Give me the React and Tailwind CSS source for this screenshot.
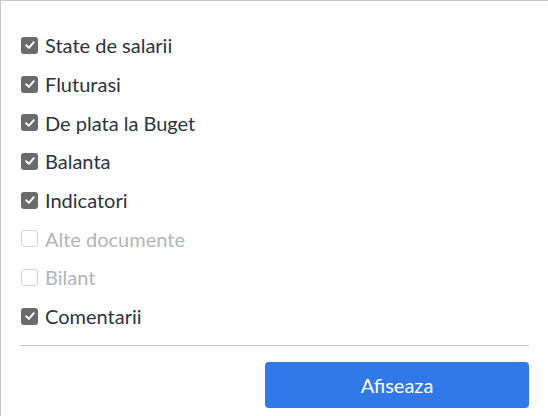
import React from "react";

const items = [
  { label: "State de salarii", checked: true },
  { label: "Fluturasi", checked: true },
  { label: "De plata la Buget", checked: true },
  { label: "Balanta", checked: true },
  { label: "Indicatori", checked: true },
  { label: "Alte documente", checked: false },
  { label: "Bilant", checked: false },
  { label: "Comentarii", checked: true },
];

// checkbox drawn as a small box, checked ones get a white tick
function Box({ checked }) {
  if (!checked) {
    return (
      <span className="block shrink-0 w-[17px] h-[17px] rounded-[3px] border border-[#d4d4d4] bg-white" />
    );
  }
  return (
    <span className="flex shrink-0 items-center justify-center w-[17px] h-[17px] rounded-[3px] bg-[#6b6b6b]">
      <svg width="12" height="12" viewBox="0 0 12 12" fill="none">
        <path
          d="M2.2 6.3 L4.9 8.9 L9.8 3.2"
          stroke="white"
          strokeWidth="2"
          strokeLinecap="round"
          strokeLinejoin="round"
        />
      </svg>
    </span>
  );
}

const App = () => {
  return (
    <div
      className="w-[548px] h-[416px] bg-white border-t border-l border-[#c8c8c8] overflow-hidden"
      style={{ fontFamily: "Lato, 'Liberation Sans', sans-serif" }}
    >
      <div className="pt-[25px] pl-[19px] pr-[19px]">
        <ul className="flex flex-col pl-[1px]">
          {items.map((item) => (
            <li
              key={item.label}
              className="flex items-center gap-[7px] h-[38.7px]"
            >
              <Box checked={item.checked} />
              <span
                className={
                  "text-[20px] leading-none " +
                  (item.checked ? "text-[#2c3340]" : "text-[#b4b4b4]")
                }
              >
                {item.label}
              </span>
            </li>
          ))}
        </ul>
        <div className="mt-[9px] border-t border-[#c8c8c8]" />
        <div className="flex justify-end mt-[16px]">
          <button className="w-[264px] h-[46px] rounded-[4px] bg-[#3178e8] text-white text-[20px]">
            Afiseaza
          </button>
        </div>
      </div>
    </div>
  );
};

export default App;
